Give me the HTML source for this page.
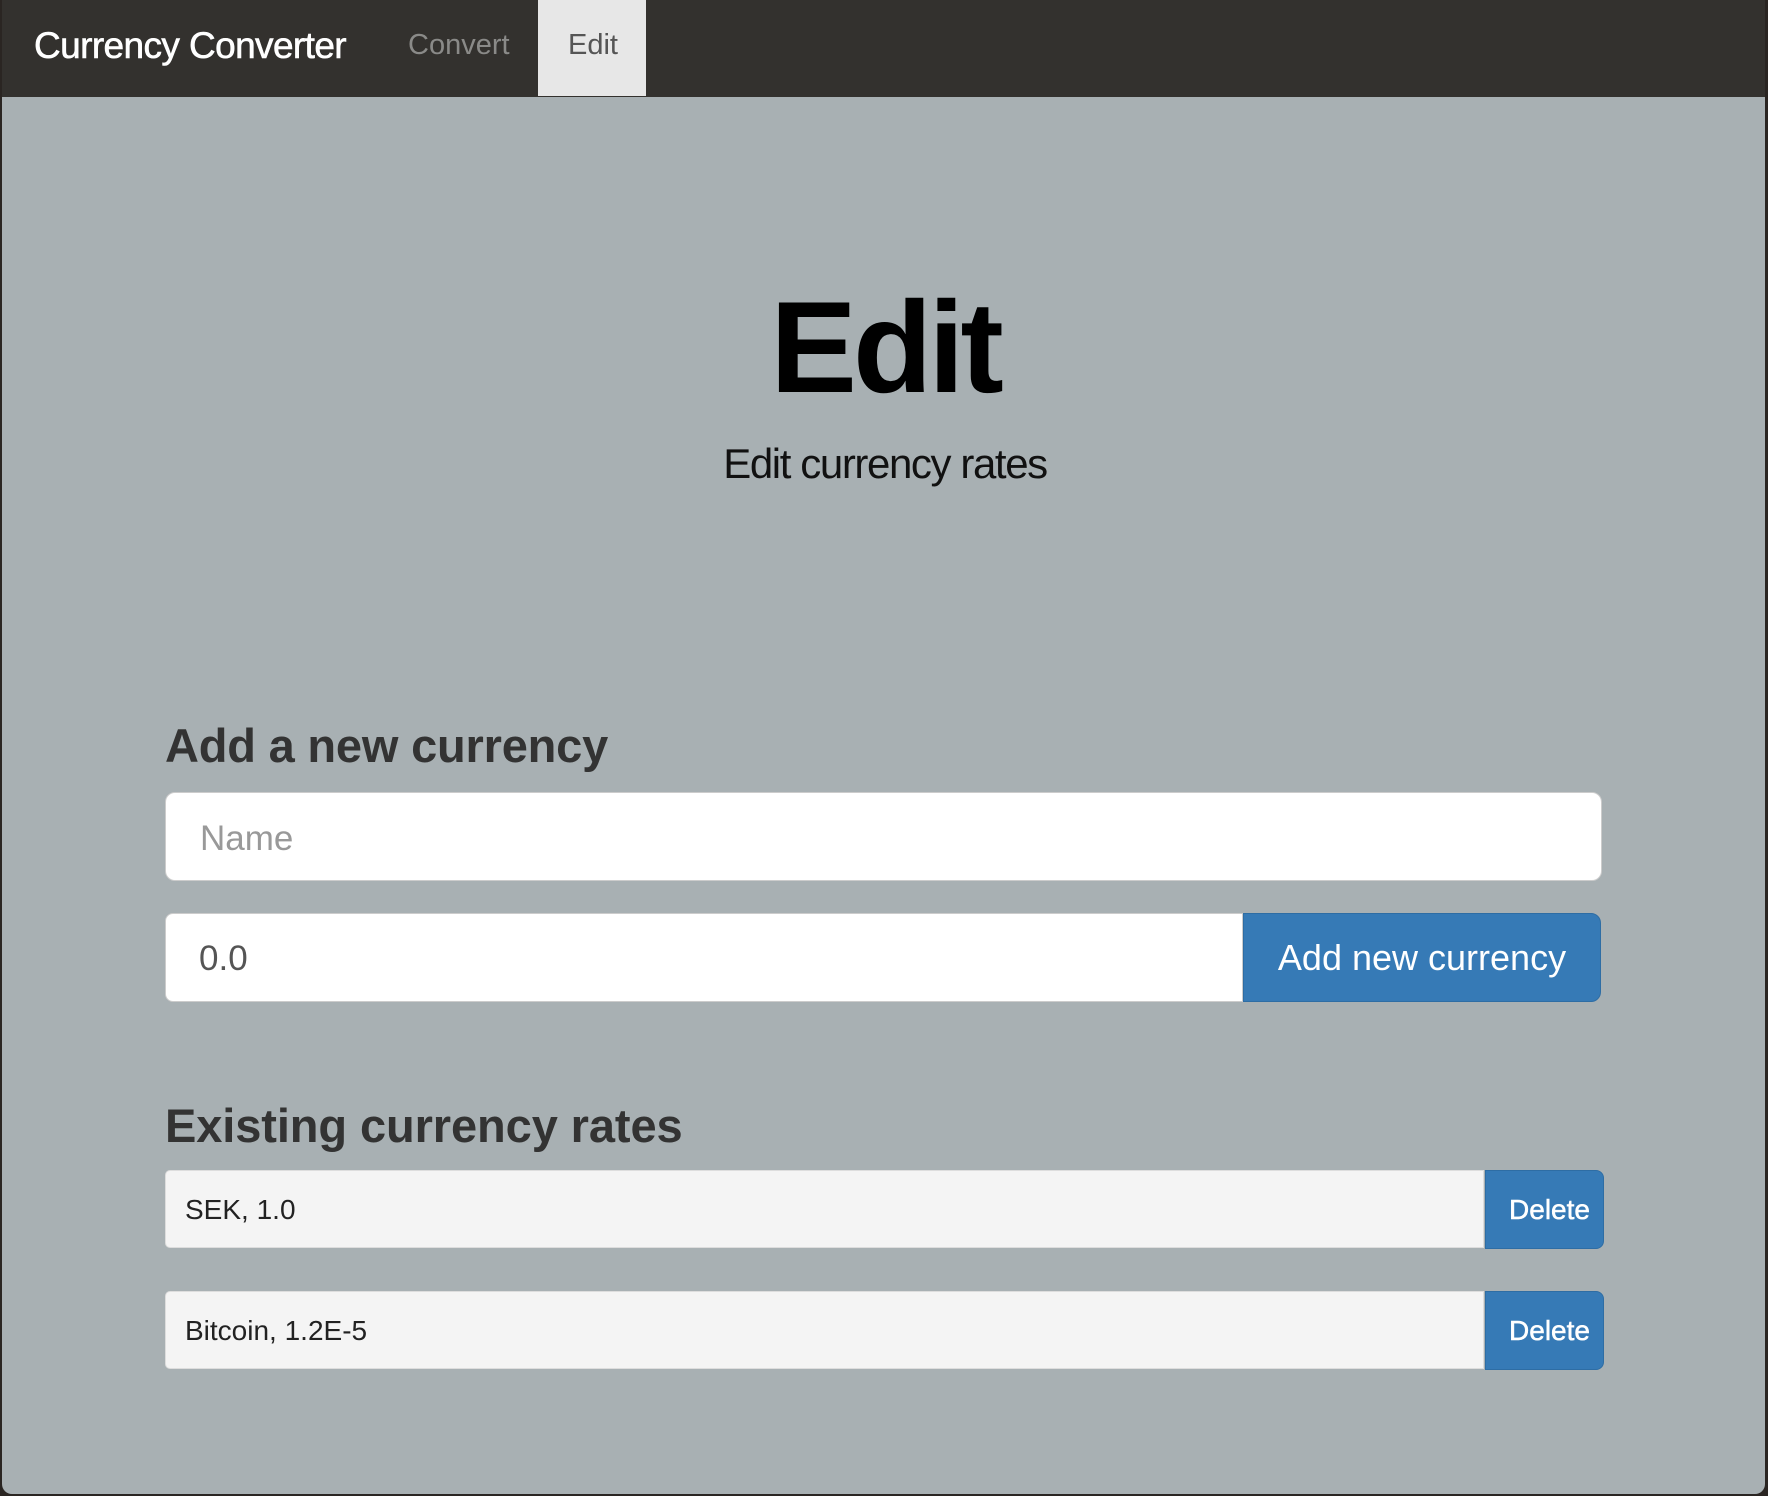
<!DOCTYPE html>
<html><head><meta charset="utf-8"><style>
*{box-sizing:border-box;margin:0;padding:0}
body{width:1768px;height:1496px;background:#2a2522;font-family:"Liberation Sans",Arial,sans-serif;position:relative;overflow:hidden}
.win{position:absolute;left:2px;top:0;width:1763px;height:1494px;background:#a8b0b3;border-radius:0 0 10px 10px;overflow:hidden}
.nav{position:absolute;left:0;top:0;width:100%;height:97px;background:#33312e}
.a{position:absolute;line-height:1;white-space:nowrap}
.inp{position:absolute;background:#fff;border:1px solid #ccc;border-radius:8px}
.row{position:absolute;background:#f4f4f4;border:1px solid #ddd;border-radius:5px 0 0 5px}
.btn{position:absolute;background:#367ab6;border:1px solid #2e6da4;color:#fff;border-radius:0 8px 8px 0;display:flex;align-items:center;justify-content:center}
</style></head><body>
<div class="win">
<div class="nav">
<div class="a" style="left:32px;top:27px;font-size:37px;color:#fff;letter-spacing:-0.6px;-webkit-text-stroke:0.6px #fff">Currency Converter</div>
<div class="a" style="left:406px;top:31px;font-size:29px;color:#8a8a88">Convert</div>
<div style="position:absolute;left:536px;top:0;width:108px;height:96px;background:#e7e7e7"></div>
<div class="a" style="left:566px;top:31px;font-size:29px;color:#555">Edit</div>
</div>
<div class="a" style="left:0;width:1766px;text-align:center;top:282px;font-size:130px;font-weight:bold;color:#000;letter-spacing:-4px">Edit</div>
<div class="a" style="left:0;width:1766px;text-align:center;top:443px;font-size:42px;color:#111;letter-spacing:-1.4px">Edit currency rates</div>
<div class="a" style="left:163px;top:722px;font-size:47px;color:#333;font-weight:bold;letter-spacing:-0.2px">Add a new currency</div>
<div class="inp" style="left:163px;top:792px;width:1437px;height:89px;border-radius:10px"></div>
<div class="a" style="left:198px;top:821px;font-size:35px;color:#999">Name</div>
<div class="inp" style="left:163px;top:913px;width:1078px;height:89px;border-radius:8px 0 0 8px"></div>
<div class="a" style="left:197px;top:941px;font-size:35px;color:#555">0.0</div>
<div class="btn" style="left:1241px;top:913px;width:358px;height:89px;font-size:36px;border-radius:0 10px 10px 0">Add new currency</div>
<div class="a" style="left:163px;top:1102px;font-size:47px;color:#333;font-weight:bold;letter-spacing:-0.1px">Existing currency rates</div>
<div class="row" style="left:163px;top:1170px;width:1319px;height:78px"></div>
<div class="a" style="left:183px;top:1196px;font-size:28px;color:#222">SEK, 1.0</div>
<div class="btn" style="left:1483px;top:1170px;width:119px;height:79px;font-size:28px;padding-left:10px;-webkit-text-stroke:0.5px #fff">Delete</div>
<div class="row" style="left:163px;top:1291px;width:1319px;height:78px"></div>
<div class="a" style="left:183px;top:1317px;font-size:28px;color:#222">Bitcoin, 1.2E-5</div>
<div class="btn" style="left:1483px;top:1291px;width:119px;height:79px;font-size:28px;padding-left:10px;-webkit-text-stroke:0.5px #fff">Delete</div>
</div>
</body></html>
